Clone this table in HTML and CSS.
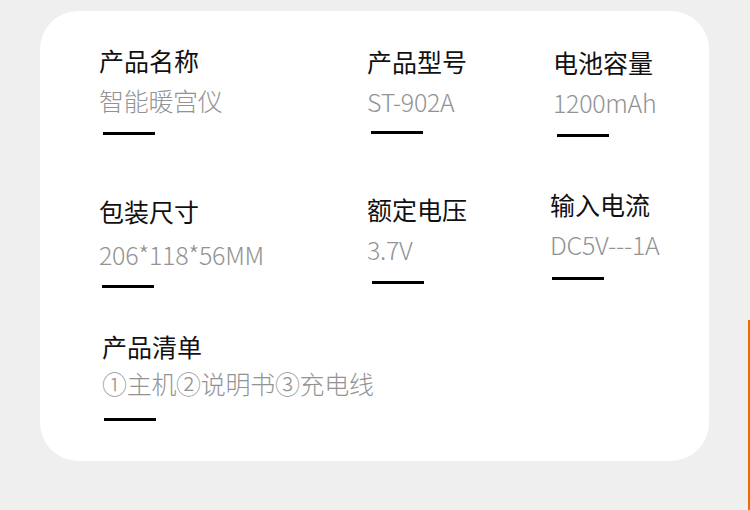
FILE: index.html
```html
<!DOCTYPE html>
<html lang="zh-CN">
<head>
<meta charset="utf-8">
<title>产品参数</title>
<link rel="stylesheet" href="styles.css">
</head>
<body>
<div class="page">
  <section class="card">
    <div class="spec r1">
      <div class="spec-title">产品名称</div>
      <div class="spec-value">智能暖宫仪</div>
      <div class="spec-line"></div>
    </div>
    <div class="spec r1 c2">
      <div class="spec-title">产品型号</div>
      <div class="spec-value">ST-902A</div>
      <div class="spec-line"></div>
    </div>
    <div class="spec r1 c3">
      <div class="spec-title">电池容量</div>
      <div class="spec-value">1200mAh</div>
      <div class="spec-line"></div>
    </div>
    <div class="spec r2 c1">
      <div class="spec-title">包装尺寸</div>
      <div class="spec-value">206*118*56MM</div>
      <div class="spec-line"></div>
    </div>
    <div class="spec r2 c2">
      <div class="spec-title">额定电压</div>
      <div class="spec-value">3.7V</div>
      <div class="spec-line"></div>
    </div>
    <div class="spec r2 c3">
      <div class="spec-title">输入电流</div>
      <div class="spec-value">DC5V---1A</div>
      <div class="spec-line"></div>
    </div>
    <div class="spec r3">
      <div class="spec-title">产品清单</div>
      <div class="spec-value">①主机②说明书③充电线</div>
      <div class="spec-line"></div>
    </div>
  </section>
  <div class="edge-mark"></div>
</div>
</body>
</html>
```

FILE: styles.css
```css
* { box-sizing: border-box; }

html, body {
  margin: 0;
  padding: 0;
  background: #efefef;
}

body {
  font-family: "Noto Sans CJK SC", "Noto Sans", sans-serif;
  width: 750px;
  height: 510px;
  overflow: hidden;
}

.page {
  position: relative;
  width: 750px;
  height: 510px;
  padding: 11px 0 0 40px;
}

.card {
  width: 669px;
  height: 450px;
  background: #ffffff;
  border-radius: 38px;
  padding: 37px 0 0 59px;
  display: grid;
  grid-template-columns: 268px 186px 1fr;
  grid-template-rows: 144px 142px auto;
  align-items: start;
}

.spec {
  display: flex;
  flex-direction: column;
  align-items: flex-start;
}

.spec-title {
  font-size: 25px;
  line-height: 25px;
  color: #111111;
  font-weight: 400;
  white-space: nowrap;
}

.spec-value {
  margin-top: 15px;
  font-family: "Noto Sans CJK SC Light", "Noto Sans CJK SC", "Noto Sans", sans-serif;
  font-size: 25px;
  line-height: 25px;
  color: #939393;
  font-weight: 300;
  letter-spacing: -0.3px;
  white-space: nowrap;
}

.spec-line {
  margin-top: 19px;
  margin-left: 4px;
  width: 52px;
  height: 3px;
  background: #000000;
}

/* per-cell fine offsets */
.r1.c2 { margin-top: 1px; }
.r1.c3 { margin-top: 2px; }
.r1.c2 .spec-line { margin-top: 17px; }

.r2.c1 { margin-top: 7px; }
.r2.c1 .spec-value { margin-top: 18px; }
.r2.c1 .spec-line { margin-top: 18px; margin-left: 3px; }
.r2.c2 { margin-top: 5px; }
.r2.c2 .spec-line { margin-left: 5px; }
.r2.c3 { margin-left: -3px; }
.r2.c3 .spec-line { margin-top: 20px; margin-left: 2px; }

.r3 { margin-left: 3px; }
.r3 .spec-value { margin-top: 12px; }
.r3 .spec-line { margin-top: 22px; margin-left: 2px; }

.edge-mark {
  position: absolute;
  left: 748px;
  top: 320px;
  width: 2px;
  height: 190px;
  background: #f06a00;
}
```
